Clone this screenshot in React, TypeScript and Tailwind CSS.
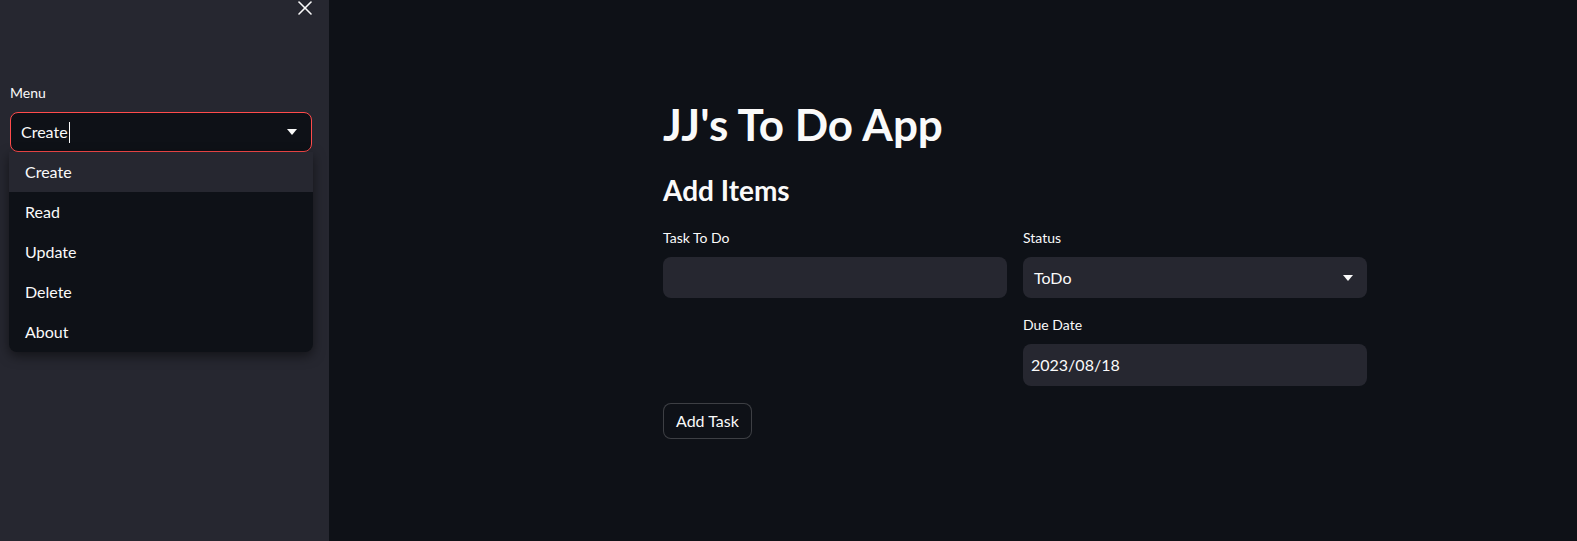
import { X } from 'lucide-react';

const font = { fontFamily: '"Source Sans Pro", Lato, "Noto Sans", sans-serif' };

function Caret() {
  return (
    <svg width="10" height="6" viewBox="0 0 10 6" className="shrink-0">
      <path d="M0 0 L10 0 L5 6 Z" fill="#fafafa" />
    </svg>
  );
}

const menuItems = ['Create', 'Read', 'Update', 'Delete', 'About'];

export default function App() {
  return (
    <div className="flex h-[541px] w-full overflow-hidden bg-[#0e1117] text-[#fafafa] font-['Lato',sans-serif]" style={font}>
      <aside className="relative w-[329px] shrink-0 bg-[#262730] pl-[10px] pt-[80px]">
        <button className="absolute right-[12px] top-[-4px] text-[#fafafa]">
          <X size={24} strokeWidth={1.6} />
        </button>
        <div className="mb-[8px] flex h-[24px] items-center text-[14px]">Menu</div>
        <div className="relative w-[302px]">
          <div className="flex h-[40px] items-center rounded-[8px] border border-[#ff4b4b] bg-[#0e1117] pl-[10px] pr-[14px]">
            <span className="text-[16px]">Create</span>
            <span className="ml-[1px] h-[21px] w-[1px] bg-[#fafafa]" />
            <div className="flex-1" />
            <Caret />
          </div>
          <ul className="absolute left-[-1px] right-[-1px] top-[40px] overflow-hidden rounded-b-[8px] bg-[#0e1117] shadow-[0_4px_12px_rgba(0,0,0,0.5)]">
            {menuItems.map((item, i) => (
              <li
                key={item}
                className={`flex h-[40px] items-center pl-[16px] text-[16px] ${i === 0 ? 'bg-[#262730]' : ''}`}
              >
                {item}
              </li>
            ))}
          </ul>
        </div>
      </aside>

      <main className="flex-1">
        <div className="ml-[334px] w-[704px] pt-[96px]">
          <h1 className="flex h-[56px] items-center text-[44px] font-bold leading-[1.2]">JJ's To Do App</h1>
          <h2 className="mt-[19px] flex h-[40px] items-center text-[28px] font-bold leading-[1.2]">Add Items</h2>
          <div className="mt-[14px] grid grid-cols-2 gap-x-[16px]">
            <div>
              <div className="mb-[8px] flex h-[24px] items-center text-[14px]">Task To Do</div>
              <div className="h-[41px] rounded-[8px] bg-[#262730]" />
            </div>
            <div>
              <div className="mb-[8px] flex h-[24px] items-center text-[14px]">Status</div>
              <div className="flex h-[41px] items-center rounded-[8px] bg-[#262730] pl-[11px] pr-[14px]">
                <span className="flex-1 text-[16px]">ToDo</span>
                <Caret />
              </div>
              <div className="mb-[8px] mt-[14px] flex h-[24px] items-center text-[14px]">Due Date</div>
              <div className="flex h-[42px] items-center rounded-[8px] bg-[#262730] pl-[8px] text-[16px]">2023/08/18</div>
            </div>
          </div>
          <button className="mt-[17px] h-[36px] rounded-[8px] border border-[rgba(250,250,250,0.2)] bg-[#0e1117] px-[12px] text-[16px]">
            Add Task
          </button>
        </div>
      </main>
    </div>
  );
}
